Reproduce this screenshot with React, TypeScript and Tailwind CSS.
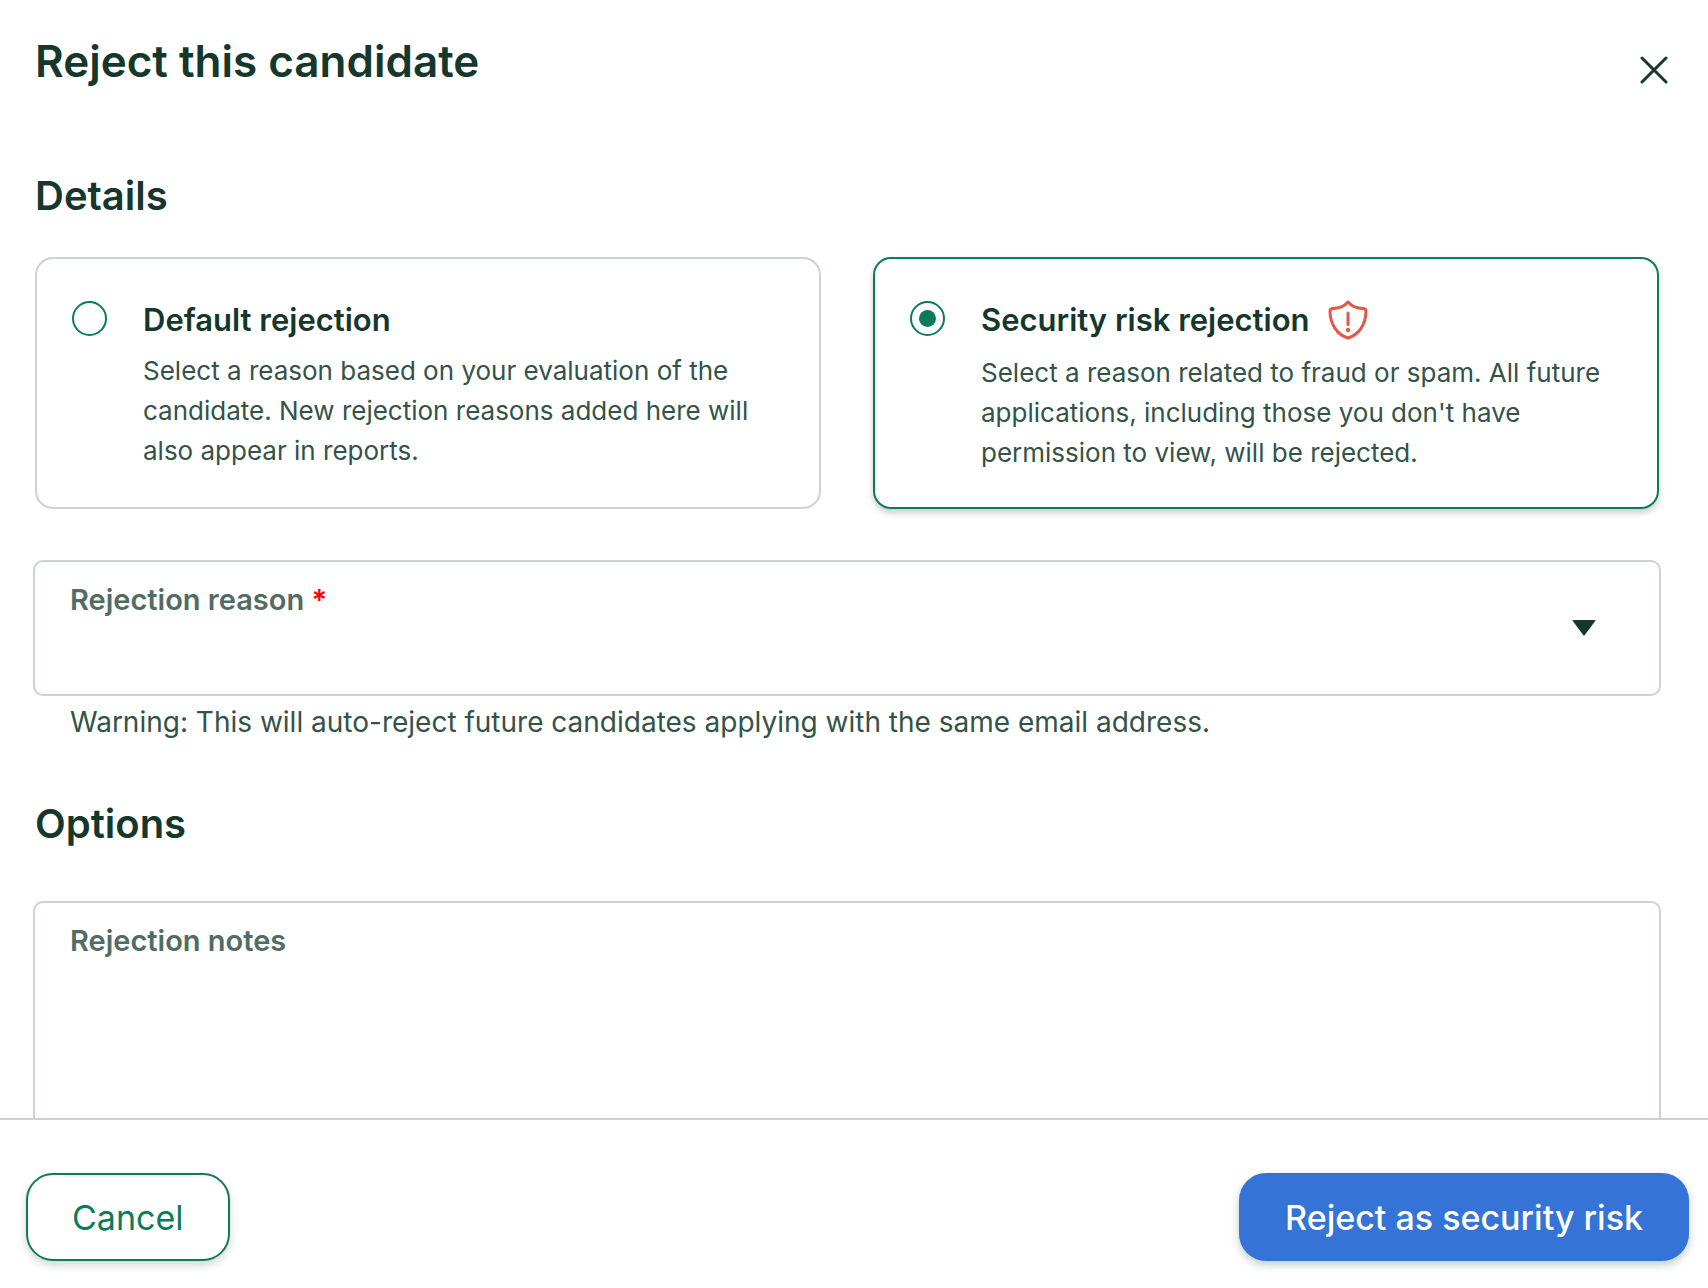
// Reject candidate dialog

import { FC, ReactNode, useState } from "react"

type RejectionType = 'default' | 'security';

export default function RejectCandidate() {

    const [type, setType] = useState<RejectionType>('security');

    // reason, notes
    const [values, setValues] = useState({
        reason: '',
        notes: '',
    });

    return (
        <div className="flex h-screen flex-col bg-white font-['Inter','Liberation_Sans',sans-serif] text-[#15372c]">
            <header className="flex shrink-0 items-start justify-between pt-[31px] pr-9 pl-[35px]">
                <h1 className="text-[44px] leading-[60px] font-semibold">Reject this candidate</h1>
                <button type="button" aria-label="Close" className="mt-[21px] p-1">
                    <CloseIcon />
                </button>
            </header>

            <main className="min-h-0 flex-1 overflow-y-auto pt-[81px] pr-[47px] pl-[33px] [scrollbar-width:none]">
                <h2 className="pl-[2px] text-[40px] leading-12 font-semibold">Details</h2>
                {/* Rejection type */}
                <div className="mt-[37px] grid grid-cols-2 gap-[52px] px-[2px]">
                    <Choice
                        title="Default rejection"
                        checked={type === 'default'}
                        onChange={() => setType('default')}
                    >
                        Select a reason based on your evaluation of the
                        candidate. New rejection reasons added here will
                        also appear in reports.
                    </Choice>
                    <Choice
                        title="Security risk rejection"
                        icon={<ShieldIcon />}
                        checked={type === 'security'}
                        onChange={() => setType('security')}
                    >
                        Select a reason related to fraud or spam. All future
                        applications, including those you don't have
                        permission to view, will be rejected.
                    </Choice>
                </div>

                {/* Reason */}
                <div className="mt-[51px] flex h-[136px] items-center rounded-[10px] border-2 border-[#cdd3d1] pr-[63px] pl-[35px]">
                    <div className="flex h-full flex-1 flex-col pt-[18px]">
                        <label htmlFor="reason" className="text-[29px] leading-10 font-semibold text-[#526c63]">
                            Rejection reason <span className="text-[#ff0000]">*</span>
                        </label>
                        <select
                            id="reason"
                            required
                            value={values.reason}
                            onChange={(event) => setValues({ ...values, reason: event.target.value })}
                            className="w-full flex-1 appearance-none bg-transparent text-[26px] outline-none"
                        >
                            <option value=""></option>
                        </select>
                    </div>
                    <ArrowIcon />
                </div>
                <p className="mt-[6px] pl-[37px] text-[28px] leading-10 text-[#335348]">
                    Warning: This will auto-reject future candidates applying with the same email address.
                </p>

                <h2 className="mt-[58px] pl-[2px] text-[40px] leading-12 font-semibold">Options</h2>
                {/* Notes */}
                <div className="mt-[53px] rounded-[10px] border-2 border-[#cdd3d1] px-[35px] pt-[18px]">
                    <label htmlFor="notes" className="block text-[29px] leading-10 font-semibold text-[#526c63]">
                        Rejection notes
                    </label>
                    <textarea
                        id="notes"
                        value={values.notes}
                        onChange={(event) => setValues({ ...values, notes: event.target.value })}
                        className="block h-60 w-full resize-none bg-transparent text-[26px] outline-none"
                    />
                </div>
            </main>

            <footer className="flex shrink-0 items-center justify-between border-t-2 border-[#cdd3d1] pt-[53px] pr-[19px] pb-[27px] pl-[26px]">
                <button
                    type="button"
                    className="h-22 rounded-[27px] border-2 border-[#0b7b5a] px-11 text-[34px] text-[#0b7b5a] shadow-[0_4px_8px_rgba(21,55,44,0.2)]"
                >
                    Cancel
                </button>
                <button
                    type="button"
                    className="h-22 rounded-[27px] bg-[#3574d6] px-[46px] text-[34px] font-medium text-white shadow-[0_4px_8px_rgba(21,55,44,0.25)]"
                >
                    Reject as security risk
                </button>
            </footer>
        </div>
    )
};


// Selectable card with a radio
const Choice: FC<{
    title: string;
    icon?: ReactNode;
    checked: boolean;
    onChange: () => void;
    children: ReactNode;
}> = ({ title, icon, checked, onChange, children }) => {
    return (
        <label
            className={`flex items-start rounded-[18px] border-2 pt-[39px] pr-12 pb-[34px] pl-[35px]
            ${checked ? 'border-[#0b7b5a] shadow-[0_4px_6px_rgba(0,0,0,0.2)]' : 'border-[#cdd3d1]'}`}
        >
            <input
                type="radio"
                name="rejection-type"
                checked={checked}
                onChange={onChange}
                className="mt-[3px] grid size-[35px] shrink-0 appearance-none place-items-center rounded-full border-2 border-[#0b7b5a]
                before:size-[17px] before:rounded-full checked:before:bg-[#0b7b5a] before:content-['']"
            />
            <span className="ml-9 block">
                <span className="flex items-start gap-[19px] text-[31px] leading-11 font-semibold">
                    {title}
                    {icon}
                </span>
                <span className="mt-[9px] block text-[26px] leading-10 text-[#335348]">{children}</span>
            </span>
        </label>
    )
}

const CloseIcon = () => (
    <svg width="28" height="28" viewBox="0 0 28 28" fill="none" stroke="#15372c" strokeWidth="3" strokeLinecap="round">
        <path d="M2 2L26 26M26 2L2 26" />
    </svg>
)

const ArrowIcon = () => (
    <svg width="24" height="16" viewBox="0 0 24 16" fill="#15372c" className="pointer-events-none shrink-0">
        <path d="M1.2 0H22.8Q23.8 0 23.2 1L12.8 15Q12 16 11.2 15L0.8 1Q0.2 0 1.2 0Z" />
    </svg>
)

// Shield with exclamation mark
const ShieldIcon = () => (
    <svg width="40" height="46" viewBox="0 0 40 46" fill="none" stroke="#e5554a" strokeWidth="3" strokeLinecap="round" strokeLinejoin="round">
        <path d="M20 4C17 7.500 11 10.500 5 10.500C3 10.500 2 11.500 2 13.500C2.300 26.500 9 36.500 20 40C31 36.500 37.700 26.500 38 13.500C38 11.500 37 10.500 35 10.500C29 10.500 23 7.500 20 4Z" />
        <path d="M20 15V26.500" />
        <circle cx="20" cy="32" r="2.200" fill="#e5554a" stroke="none" />
    </svg>
)
